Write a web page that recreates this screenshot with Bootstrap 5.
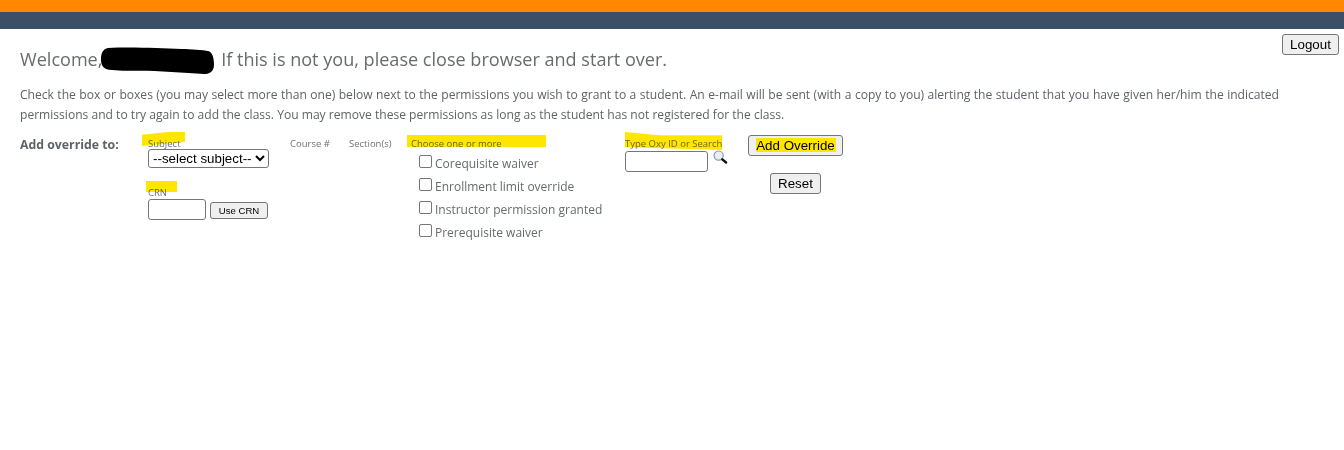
<!DOCTYPE html>
<html lang="en">
<head>
<meta charset="utf-8">
<title>Add override</title>
<link href="https://cdn.jsdelivr.net/npm/bootstrap@5.3.0/dist/css/bootstrap.min.css" rel="stylesheet">
<style>
html,body{height:450px;overflow:hidden;background:#fff}
body{font-family:"Open Sans",sans-serif;color:#5f6368;font-size:12px;line-height:20px}
.bar-orange{height:12px;background:#ff8800}
.bar-navy{height:17px;background:#3b4f66}
.page-body{padding:5px 5px 0 20px}
.native{font-family:"Liberation Sans",Arial,sans-serif;font-size:13.33px;line-height:normal;color:#000;background:#efefef;border:1px solid #767676;border-radius:3px;padding:1px 6px;height:21px}
.logout-row{height:21px}
.logout-btn{width:57px}
.welcome{font-size:18.07px;line-height:26px;margin:-9px 0 0;font-weight:400;color:#666b70;display:flex}
.redact-slot{position:relative;width:114px;flex:none}
.redact{position:absolute;left:-2px;top:1px;width:115px;height:28px}
.intro{margin:13px 0 0;width:1259px;line-height:20px;font-size:12.08px;text-align:justify}
.form-row{margin-top:10px;height:120px}
.lead-label{width:128px;flex:none;font-weight:700;font-size:12.3px;line-height:20px}
.tiny{font-size:9.5px;line-height:12px;color:#6d7277;position:relative;display:block}
.hl{position:absolute;background:#ffe600;mix-blend-mode:multiply;pointer-events:none}
.hl-subject{left:-6px;top:-6px;width:43px;height:14px;clip-path:polygon(0 20%,60% 0,100% 0,100% 70%,40% 90%,0 100%)}
.hl-crn{left:-2px;top:-6px;width:31px;height:11px}
.hl-choose{left:-4px;top:-3px;width:139px;height:12px}
.hl-oxy{left:0;top:-6px;width:97px;height:18px;clip-path:polygon(0 0,35% 18%,100% 18%,100% 100%,0 85%)}
.col-subject{width:142px;flex:none;padding-top:3px}
.col-course{width:59px;flex:none;padding-top:3px}
.col-section{width:62px;flex:none;padding-top:3px}
.col-check{width:214px;flex:none;padding-top:3px}
.col-oxy{width:123px;flex:none;padding-top:3px}
.col-actions{width:96px;flex:none}
.subject-select{display:block;width:121px;height:19px;margin-top:-1px;font-family:"Liberation Sans",sans-serif;font-size:13.33px;color:#000;background:#fff;border:1px solid #767676;border-radius:3px;padding:0}
.field{display:block;height:21px;border:1px solid #767676;border-radius:3px;background:#fff;padding:0}
.crn-label{margin-top:19px}
.crn-field{width:58px}
.crn-btn{font-size:9.6px;height:17px;width:58px;padding:0;margin-left:4px;margin-top:3px}
.check-list{margin:2px 0 0 8px}
.check-item{display:flex;align-items:center;height:23px;font-size:12px;margin:0;color:#666b70}
.check-item input{width:13px;height:13px;margin:-5px 3px 0 0;appearance:none;border:1px solid #767676;border-radius:2px;background:#fff;flex:none}
.oxy-field{width:83px;margin-top:1px}
.mag{margin:0 0 0 5px;flex:none}
.add-btn{display:block;width:95px;position:relative;padding:0}
.add-mark{position:absolute;left:7px;top:2px;width:80px;height:14px;background:#ffe600}
.add-text{position:relative}
.reset-btn{display:block;width:51px;margin:17px 0 0 22px;padding:0}
</style>
</head>
<body>
<div class="bar-orange"></div>
<div class="bar-navy"></div>
<div class="page-body">
  <div class="logout-row d-flex justify-content-end"><button type="button" class="native logout-btn">Logout</button></div>
  <h1 class="welcome"><span>Welcome,</span><span class="redact-slot"><svg class="redact" viewBox="0 0 116 27" preserveAspectRatio="none" aria-hidden="true"><path d="M8 1C30 0 60 1 82 2c10 0 21 1 28 2 4 2 5 8 5 13 0 6-4 9-10 9-20-1-46-3-66-3-10 0-22 0-30-1C3 21 1 17 1 12 1 6 3 2 8 1z" fill="#000"/></svg></span><span>&nbsp;If this is not you, please close browser and start over.</span></h1>
  <p class="intro">Check the box or boxes (you may select more than one) below next to the permissions you wish to grant to a student. An e-mail will be sent (with a copy to you) alerting the student that you have given her/him the indicated permissions and to try again to add the class. You may remove these permissions as long as the student has not registered for the class.</p>
  <form class="form-row d-flex">
    <div class="lead-label">Add override to:</div>
    <div class="col-subject">
      <label class="tiny">Subject<span class="hl hl-subject"></span></label>
      <select class="subject-select"><option>--select subject--</option></select>
      <label class="tiny crn-label">CRN<span class="hl hl-crn"></span></label>
      <div class="d-flex align-items-start"><input class="field crn-field" type="text" aria-label="CRN"><button type="button" class="native crn-btn">Use CRN</button></div>
    </div>
    <div class="col-course"><span class="tiny">Course #</span></div>
    <div class="col-section"><span class="tiny">Section(s)</span></div>
    <div class="col-check">
      <span class="tiny">Choose one or more<span class="hl hl-choose"></span></span>
      <div class="check-list">
        <label class="check-item"><input type="checkbox">Corequisite waiver</label>
        <label class="check-item"><input type="checkbox">Enrollment limit override</label>
        <label class="check-item"><input type="checkbox">Instructor permission granted</label>
        <label class="check-item"><input type="checkbox">Prerequisite waiver</label>
      </div>
    </div>
    <div class="col-oxy">
      <span class="tiny">Type Oxy ID or Search<span class="hl hl-oxy"></span></span>
      <div class="d-flex align-items-start"><input class="field oxy-field" type="text" aria-label="Oxy ID">
        <svg class="mag" width="15" height="15" viewBox="0 0 15 15" aria-hidden="true"><circle cx="5.6" cy="5.6" r="4.6" fill="#e8f0f6" stroke="#8a9aa6" stroke-width="1.2"/><path d="M9.3 9.3l3.8 3.2" stroke="#111" stroke-width="2.4" stroke-linecap="round"/></svg>
      </div>
    </div>
    <div class="col-actions">
      <button type="button" class="native add-btn"><span class="add-mark"></span><span class="add-text">Add Override</span></button>
      <button type="button" class="native reset-btn">Reset</button>
    </div>
  </form>
</div>
<script src="https://cdn.jsdelivr.net/npm/bootstrap@5.3.0/dist/js/bootstrap.bundle.min.js"></script>
</body>
</html>
